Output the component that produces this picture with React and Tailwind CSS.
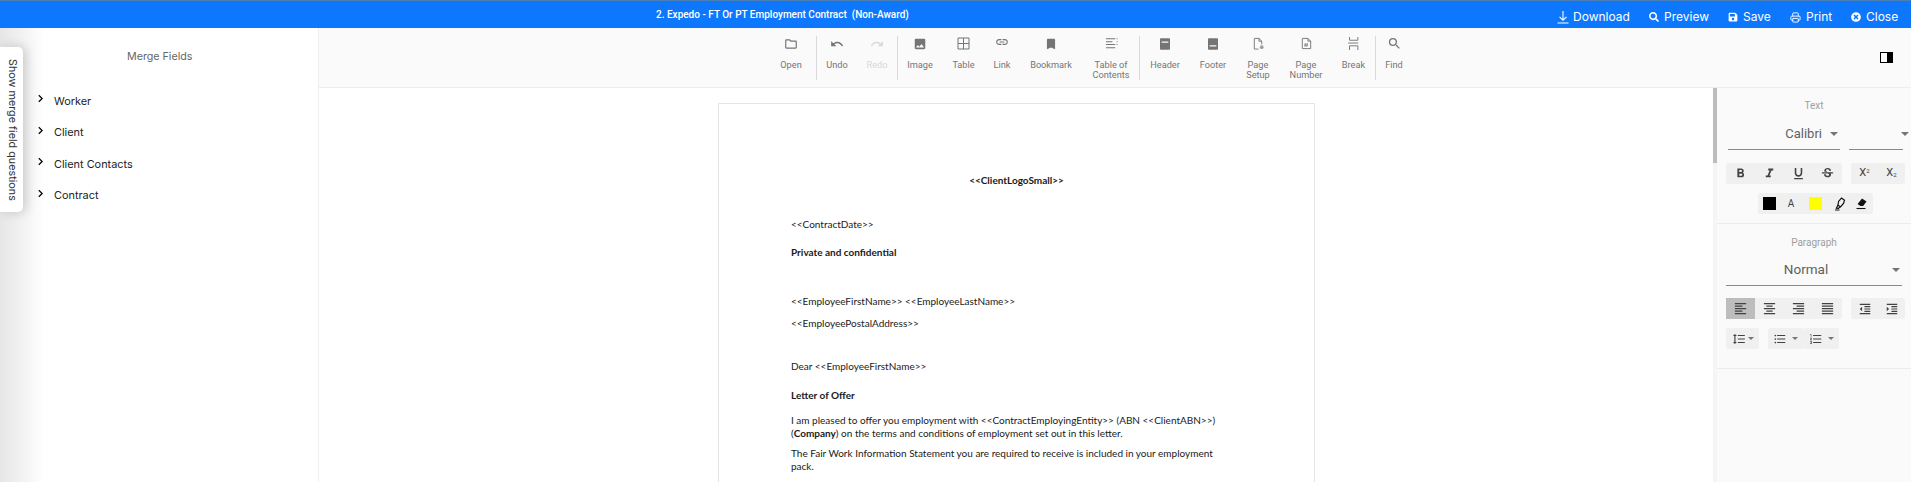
import {
  MdOutlineFolder, MdUndo, MdRedo, MdImage, MdLink, MdBookmark,
  MdSearch, MdFormatBold, MdFormatItalic, MdFormatUnderlined, MdStrikethroughS,
  MdFormatAlignLeft, MdFormatAlignCenter, MdFormatAlignRight, MdFormatAlignJustify,
  MdFormatIndentDecrease, MdFormatIndentIncrease, MdFormatLineSpacing,
  MdFormatListBulleted, MdFormatListNumbered, MdChevronRight,
} from 'react-icons/md'
import { FaSearch, FaSave, FaTimesCircle } from 'react-icons/fa'
import { LuPrinter } from 'react-icons/lu'

const IcDownload = () => (
  <svg width="12" height="14" viewBox="0 0 12 14" fill="none" stroke="currentColor" strokeWidth="1.1">
    <path d="M6 1v9M2.5 6.8L6 10.2l3.5-3.4M.5 13h11" />
  </svg>
)
const IcTable = () => (
  <svg width="13" height="13" viewBox="0 0 13 13" fill="none" stroke="#757575">
    <path d="M1 1h11v11H1zM6.5 1v11M1 6.5h11" />
  </svg>
)
const IcToc = () => (
  <svg width="13" height="13" viewBox="0 0 14 14" fill="none" stroke="#757575" strokeWidth="1.1">
    <path d="M1 2h10M1 5h7M1 8h10M1 11.5h10M12.5 2h1M12.5 5h1M12.5 8h1" />
  </svg>
)
const IcHeader = () => (
  <svg width="10" height="12" viewBox="0 0 12 14">
    <path fill="#757575" fillRule="evenodd" d="M1 0h10a1 1 0 0 1 1 1v12a1 1 0 0 1-1 1H1a1 1 0 0 1-1-1V1a1 1 0 0 1 1-1zm1 4v1.5h8V4z" />
  </svg>
)
const IcFooter = () => (
  <svg width="10" height="12" viewBox="0 0 12 14">
    <path fill="#757575" fillRule="evenodd" d="M1 0h10a1 1 0 0 1 1 1v12a1 1 0 0 1-1 1H1a1 1 0 0 1-1-1V1a1 1 0 0 1 1-1zm1 8.5V10h8V8.5z" />
  </svg>
)
const IcPageSetup = () => (
  <svg width="13" height="13" viewBox="0 0 14 14" fill="none" stroke="#757575">
    <path d="M7 13H2.5V1.5h5l3 3V8" />
    <path d="M7.5 1.5v3h3" />
    <circle cx="10.5" cy="11" r="2" fill="#9e9e9e" stroke="none" />
  </svg>
)
const IcPageNumber = () => (
  <svg width="13" height="13" viewBox="0 0 14 14" fill="none" stroke="#757575">
    <path d="M2.5 1.5h6l3 3v8h-9z" />
    <path d="M8.5 1.5v3h3" />
    <path strokeWidth=".7" d="M6 6.5l-.6 4M8 6.5l-.6 4M4.6 7.8h4M4.4 9.3h4" />
  </svg>
)
const IcBreak = () => (
  <svg width="13" height="13" viewBox="0 0 14 14" fill="none" stroke="#757575">
    <path d="M3 0v3.5h9V0M1.5 6.5h11M3 14V9.5h9V14" transform="translate(-.3 0)" />
  </svg>
)
const IcHighlight = () => (
  <svg width="12" height="14" viewBox="0 0 12 14" fill="none" stroke="#111" strokeWidth="1.2">
    <path d="M7.5 1l3 2.2-1 3.3-3 3.5-2.6-2 .8-3.8z" />
    <path d="M4 8l-1.6 3.2 2 .2L5.9 10M1 13h4.5" />
  </svg>
)
const IcEraser = () => (
  <svg width="13" height="13" viewBox="0 0 13 13">
    <path fill="#111" d="M7 1.5l4.5 3-3.4 4.6H5.4L2.6 7z" />
    <path stroke="#111" strokeWidth="1.1" d="M1.5 11.5h9" />
  </svg>
)

const TOOLS = [
  { label: ['Open'], Icon: () => <MdOutlineFolder size={14} />, w: 'w-[50px]', sep: true },
  { label: ['Undo'], Icon: () => <MdUndo size={14} />, w: 'w-[40px]' },
  { label: ['Redo'], Icon: () => <MdRedo size={14} />, w: 'w-[40px]', disabled: true, sep: true },
  { label: ['Image'], Icon: () => <MdImage size={14} />, w: 'w-[44px]' },
  { label: ['Table'], Icon: IcTable, w: 'w-[43px]' },
  { label: ['Link'], Icon: () => <MdLink size={14} className="-mt-1" />, w: 'w-[34px]' },
  { label: ['Bookmark'], Icon: () => <MdBookmark size={14} />, w: 'w-[64px]' },
  { label: ['Table of', 'Contents'], Icon: IcToc, w: 'w-[56px]', sep: true },
  { label: ['Header'], Icon: IcHeader, w: 'w-[50px]' },
  { label: ['Footer'], Icon: IcFooter, w: 'w-[46px]' },
  { label: ['Page', 'Setup'], Icon: IcPageSetup, w: 'w-[44px]' },
  { label: ['Page', 'Number'], Icon: IcPageNumber, w: 'w-[52px]' },
  { label: ['Break'], Icon: IcBreak, w: 'w-[43px]', sep: true },
  { label: ['Find'], Icon: () => <MdSearch size={15} />, w: 'w-[36px]' },
]

const ACTIONS = [
  { label: 'Download', Icon: IcDownload, cls: 'w-[92px] gap-[4px]' },
  { label: 'Preview', Icon: () => <FaSearch size={10} />, cls: 'w-[79px] gap-[5px]' },
  { label: 'Save', Icon: () => <FaSave size={10} />, cls: 'w-[62px] gap-[5px]' },
  { label: 'Print', Icon: () => <LuPrinter size={11} />, cls: 'w-[61px] gap-[5px]' },
  { label: 'Close', Icon: () => <FaTimesCircle size={10} />, cls: 'w-[49px] gap-[5px]' },
]

const FIELDS = ['Worker', 'Client', 'Client Contacts', 'Contract']

function ToolButton({ label, Icon, w, disabled }) {
  return (
    <div className={`${w} flex h-[48px] flex-col items-center ${disabled ? 'text-[#d8d8d8]' : 'text-[#757575]'}`}>
      <div className="flex h-[20px] shrink-0 items-center justify-center">
        <Icon />
      </div>
      <div className="mt-[6px] text-center font-['Roboto',sans-serif] text-[9.2px] leading-[10px]">
        {label.map((l) => (
          <div key={l}>{l}</div>
        ))}
      </div>
    </div>
  )
}

function Group({ className = '', children }) {
  return <div className={`flex h-[21px] items-center rounded-[2px] bg-[#f0f0f0] ${className}`}>{children}</div>
}

function Cell({ w, active, children }) {
  return (
    <div className={`flex h-full items-center justify-center text-[#424242] ${w} ${active ? 'bg-[#bdbdbd]' : ''}`}>
      {children}
    </div>
  )
}

function Caret({ className = 'border-x-[4px] border-t-[4px]' }) {
  return <span className={`h-0 w-0 border-x-transparent border-t-[#757575] ${className}`} />
}

function PageLine({ className = '', children }) {
  return <p className={`text-[10px] leading-[13.5px] ${className}`}>{children}</p>
}

export default function App() {
  return (
    <div className="flex h-[482px] w-[1911px] flex-col overflow-hidden bg-white font-['Inter',sans-serif]">
      {/* top bar */}
      <header className="flex h-[28px] shrink-0 items-center border-t border-t-[#4a7fb5] bg-[#0d77fe] text-white">
        <div className="w-[1557px] pl-[656px] font-['Roboto',sans-serif] text-[10px] font-medium whitespace-pre">
          2. Expedo - FT Or PT Employment Contract  (Non-Award)
        </div>
        <div className="flex pt-[5px]">
          {ACTIONS.map(({ label, Icon, cls }) => (
            <div key={label} className={`flex items-center text-[12px] leading-[14px] ${cls}`}>
              <Icon />
              <span>{label}</span>
            </div>
          ))}
        </div>
      </header>

      <div className="flex min-h-0 flex-1">
        {/* merge fields */}
        <aside className="relative w-[319px] shrink-0 border-r border-[#efefef] bg-gradient-to-r from-[#e6e6e6] via-white via-[14%] to-white">
          <h2 className="pt-[21px] pl-[127px] text-[10.7px] leading-[16px] text-[#666]">Merge Fields</h2>
          <ul className="mt-[20px]">
            {FIELDS.map((f) => (
              <li key={f} className="flex h-[31.5px] items-center text-[10.9px] text-[#222]">
                <MdChevronRight size={15} className="mb-[4px] ml-[33px] text-black" />
                <span className="ml-[6px]">{f}</span>
              </li>
            ))}
          </ul>
          <div className="absolute top-[19px] left-0 flex h-[165px] w-[23px] items-center justify-center rounded-r-[5px] bg-white text-[10.8px] text-[#333] shadow-[3px_0_12px_rgba(0,0,0,0.18)] [writing-mode:vertical-rl]">
            Show merge field questions
          </div>
        </aside>

        <div className="flex min-w-0 flex-1 flex-col">
          {/* ribbon */}
          <div className="flex h-[60px] shrink-0 items-center border-b border-[#ededed] bg-[#fafafa] pl-[447px]">
            {TOOLS.map((t) => (
              <div key={t.label.join()} className="flex items-center">
                <ToolButton {...t} />
                {t.sep && <div className="h-[44px] w-px bg-[#d9d9d9]" />}
              </div>
            ))}
            <div className="ml-[468px] h-[11px] w-[13px] border-[1.5px] border-black bg-[linear-gradient(to_right,white_55%,black_55%)]" />
          </div>

          <div className="flex min-h-0 flex-1">
            {/* document */}
            <main className="min-w-0 flex-1 overflow-hidden bg-white pt-[15px] pl-[399px]">
              <div className="h-[500px] w-[597px] border border-[#e4e4e4] bg-white pt-[70px] pr-[85px] pl-[72px] font-['Lato',sans-serif] text-[#1a1a1a]">
                <PageLine className="pl-[13px] text-center font-bold">&lt;&lt;ClientLogoSmall&gt;&gt;</PageLine>
                <PageLine className="mt-[30px]">&lt;&lt;ContractDate&gt;&gt;</PageLine>
                <PageLine className="mt-[15px] font-bold">Private and confidential</PageLine>
                <PageLine className="mt-[35px]">&lt;&lt;EmployeeFirstName&gt;&gt; &lt;&lt;EmployeeLastName&gt;&gt;</PageLine>
                <PageLine className="mt-[9px]">&lt;&lt;EmployeePostalAddress&gt;&gt;</PageLine>
                <PageLine className="mt-[29px]">Dear &lt;&lt;EmployeeFirstName&gt;&gt;</PageLine>
                <PageLine className="mt-[16px] font-bold">Letter of Offer</PageLine>
                <PageLine className="mt-[11px]">
                  I am pleased to offer you employment with &lt;&lt;ContractEmployingEntity&gt;&gt; (ABN &lt;&lt;ClientABN&gt;&gt;) (<b>Company</b>) on the terms and conditions of employment set out in this letter.
                </PageLine>
                <PageLine className="mt-[6px]">
                  The Fair Work Information Statement you are required to receive is included in your employment pack.
                </PageLine>
              </div>
            </main>

            {/* scrollbar */}
            <div className="w-[4px] shrink-0 bg-[#f5f5f5]">
              <div className="h-[75px] bg-[#bdbdbd]" />
            </div>

            {/* properties */}
            <aside className="w-[194px] shrink-0 overflow-hidden bg-[#fafafa] font-['Roboto',sans-serif]">
              <section className="h-[136px] border-b border-[#ececec] pt-[12px]">
                <div className="text-center text-[10px] leading-[12px] text-[#9e9e9e]">Text</div>
                <div className="mt-[6px] flex pl-[11px]">
                  <div className="flex h-[32px] w-[112px] items-center justify-end gap-[8px] border-b border-[#8a8a8a] pr-[2px] text-[13px] text-[#616161]">
                    Calibri
                    <Caret />
                  </div>
                  <div className="ml-[9px] flex h-[32px] w-[54px] items-center justify-end border-b border-[#8a8a8a]">
                    <Caret className="-mr-[6px] border-x-[4px] border-t-[4px]" />
                  </div>
                </div>
                <div className="mt-[13px] flex pl-[9px]">
                  <Group>
                    <Cell w="w-[29px]"><MdFormatBold size={15} /></Cell>
                    <Cell w="w-[29px]"><MdFormatItalic size={15} /></Cell>
                    <Cell w="w-[29px]"><MdFormatUnderlined size={15} /></Cell>
                    <Cell w="w-[29px]"><MdStrikethroughS size={15} /></Cell>
                  </Group>
                  <Group className="ml-[9px]">
                    <Cell w="w-[27px] text-[11px]">X<sup className="text-[6px]">2</sup></Cell>
                    <Cell w="w-[27px] text-[11px]">X<sub className="text-[6px]">2</sub></Cell>
                  </Group>
                </div>
                <div className="mt-[9px] flex pl-[41px]">
                  <Group>
                    <Cell w="w-[23px]"><span className="h-[13px] w-[13px] bg-black" /></Cell>
                    <Cell w="w-[20px] text-[10px]">A</Cell>
                    <Cell w="w-[28px]"><span className="h-[13px] w-[13px] bg-[#ffff00]" /></Cell>
                    <Cell w="w-[21px]"><IcHighlight /></Cell>
                    <Cell w="w-[23px]"><IcEraser /></Cell>
                  </Group>
                </div>
              </section>

              <section className="h-[145px] border-b border-[#ececec] pt-[13px]">
                <div className="text-center text-[10px] leading-[12px] text-[#9e9e9e]">Paragraph</div>
                <div className="mx-[9px] mt-[5px] flex h-[32px] items-center border-b border-[#8a8a8a] text-[13.5px] text-[#616161]">
                  <span className="flex-1 pr-[6px] text-center">Normal</span>
                  <Caret className="mr-[2px] border-x-[4px] border-t-[4px]" />
                </div>
                <div className="mt-[12px] flex pl-[9px]">
                  <Group>
                    <Cell w="w-[29px]" active><MdFormatAlignLeft size={15} /></Cell>
                    <Cell w="w-[29px]"><MdFormatAlignCenter size={15} /></Cell>
                    <Cell w="w-[29px]"><MdFormatAlignRight size={15} /></Cell>
                    <Cell w="w-[29px]"><MdFormatAlignJustify size={15} /></Cell>
                  </Group>
                  <Group className="ml-[9px]">
                    <Cell w="w-[27px]"><MdFormatIndentDecrease size={14} /></Cell>
                    <Cell w="w-[27px]"><MdFormatIndentIncrease size={14} /></Cell>
                  </Group>
                </div>
                <div className="mt-[9px] flex pl-[9px]">
                  <Group className="w-[33px] justify-center gap-[2px]">
                    <MdFormatLineSpacing size={14} className="text-[#424242]" />
                    <Caret className="border-x-[3px] border-t-[3px]" />
                  </Group>
                  <Group className="ml-[9px] w-[35px] justify-center gap-[5px]">
                    <MdFormatListBulleted size={14} className="text-[#424242]" />
                    <Caret className="border-x-[3px] border-t-[3px]" />
                  </Group>
                  <Group className="w-[36px] justify-center gap-[5px]">
                    <MdFormatListNumbered size={14} className="text-[#424242]" />
                    <Caret className="border-x-[3px] border-t-[3px]" />
                  </Group>
                </div>
              </section>
            </aside>
          </div>
        </div>
      </div>
    </div>
  )
}
